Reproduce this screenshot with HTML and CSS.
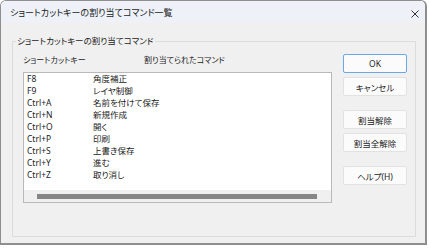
FILE: index.html
```html
<!DOCTYPE html>
<html lang="ja">
<head>
<meta charset="utf-8">
<link rel="stylesheet" href="styles.css">
</head>
<body>
<div class="window">
  <div class="titlebar">
    <span class="title">ショートカットキーの割り当てコマンド一覧</span>
    <svg class="close" width="8" height="8" viewBox="0 0 8 8"><path d="M0.5 0.5 L7.5 7.5 M7.5 0.5 L0.5 7.5" stroke="#333" stroke-width="1" fill="none"/></svg>
  </div>
  <div class="content">
    <div class="group">
      <span class="legend">ショートカットキーの割り当てコマンド</span>
      <div class="left">
        <div class="headers">
          <span>ショートカットキー</span>
          <span>割り当てられたコマンド</span>
        </div>
        <div class="list">
          <div class="rows">
            <div class="row"><span>F8</span><span>角度補正</span></div>
            <div class="row"><span>F9</span><span>レイヤ制御</span></div>
            <div class="row"><span>Ctrl+A</span><span>名前を付けて保存</span></div>
            <div class="row"><span>Ctrl+N</span><span>新規作成</span></div>
            <div class="row"><span>Ctrl+O</span><span>開く</span></div>
            <div class="row"><span>Ctrl+P</span><span>印刷</span></div>
            <div class="row"><span>Ctrl+S</span><span>上書き保存</span></div>
            <div class="row"><span>Ctrl+Y</span><span>進む</span></div>
            <div class="row"><span>Ctrl+Z</span><span>取り消し</span></div>
          </div>
          <div class="hscroll"><div class="thumb"></div></div>
        </div>
      </div>
      <div class="buttons">
        <button class="btn default">OK</button>
        <button class="btn">キャンセル</button>
        <button class="btn gap">割当解除</button>
        <button class="btn">割当全解除</button>
        <button class="btn gap">ヘルプ(H)</button>
      </div>
    </div>
  </div>
</div>
</body>
</html>
```
FILE: styles.css
```css
* { box-sizing: border-box; }
html, body { margin: 0; padding: 0; }
body {
  width: 429px;
  height: 248px;
  overflow: hidden;
  background: #ffffff;
  font-family: "Noto Sans", "Noto Sans CJK JP", sans-serif;
  font-feature-settings: "palt";
  color: #1b1b1b;
}
.window {
  width: 427px;
  height: 245px;
  border: 1px solid #8e8e8e;
  border-right-width: 2px;
  border-bottom-width: 2px;
  border-radius: 6px 6px 0 0;
  background: #f0f0f0;
  overflow: hidden;
  display: flex;
  flex-direction: column;
}
.titlebar {
  height: 21px;
  flex: none;
  background: #eef2f8;
  display: flex;
  align-items: center;
  justify-content: space-between;
  padding: 1px 6px 0 9px;
  font-size: 9px;
}
.close { display: block; margin-top: 3px; }
.content {
  flex: 1;
  padding: 19px 0 0 11px;
}
.group {
  position: relative;
  width: 404px;
  height: 196px;
  border: 1px solid #dcdcdc;
  display: flex;
  padding: 12px 0 0 10px;
}
.legend {
  position: absolute;
  top: -7px;
  left: 3px;
  padding: 0 1px;
  background: #f0f0f0;
  font-size: 8.5px;
  line-height: 12px;
}
.left { display: flex; flex-direction: column; }
.headers {
  display: grid;
  grid-template-columns: 121px auto;
  height: 12px;
  line-height: 12px;
  font-size: 8px;
  margin-bottom: 6px;
}
.list {
  width: 309px;
  height: 131px;
  border: 1px solid #b9b9b9;
  background: #ffffff;
  display: flex;
  flex-direction: column;
}
.rows { flex: 1; padding-left: 3px; }
.row {
  display: grid;
  grid-template-columns: 66px auto;
  height: 12px;
  line-height: 12px;
  font-size: 8.5px;
}
.hscroll {
  height: 12px;
  background: #f0f0f0;
  display: flex;
  align-items: center;
  padding: 0 14px 0 13px;
}
.thumb {
  flex: 1;
  height: 5px;
  background: #868686;
}
.buttons {
  display: flex;
  flex-direction: column;
  margin-left: 11px;
}
.btn {
  width: 64px;
  height: 19px;
  margin: 0 0 4px 0;
  padding: 0;
  border: 1px solid #e2e2e2;
  border-radius: 2px;
  background: #fbfbfb;
  font-family: inherit;
  font-feature-settings: "palt";
  font-size: 8.5px;
  color: #1b1b1b;
}
.btn.default { border-color: #6aa8e4; }
.btn.gap { margin-top: 10px; }
```
